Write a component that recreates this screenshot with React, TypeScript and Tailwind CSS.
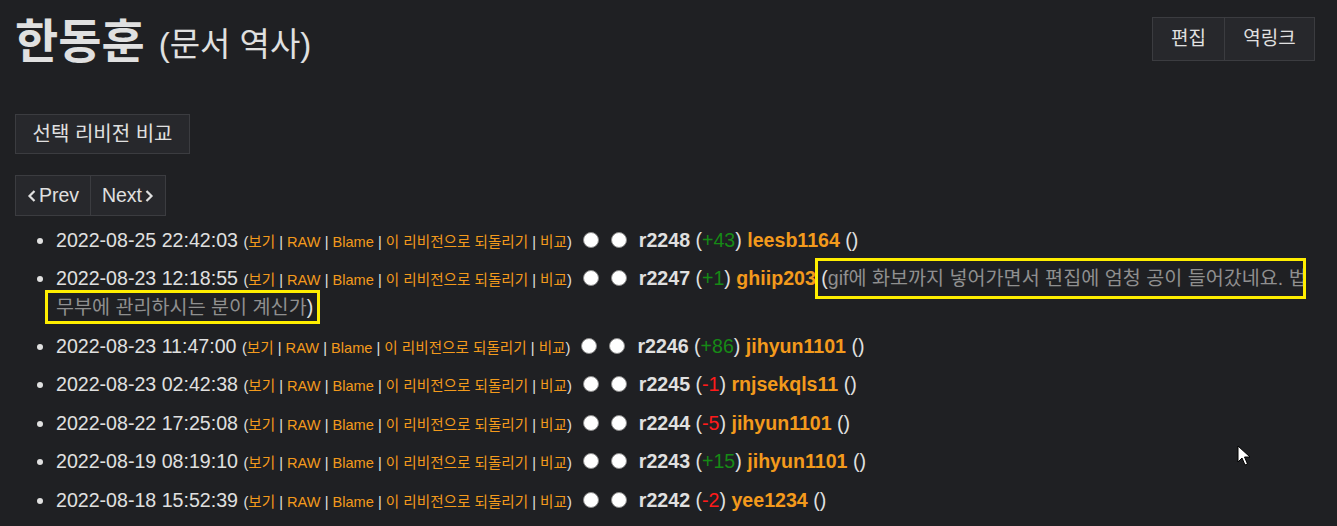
import React from "react";

const SANS = "font-['Liberation_Sans','Noto_Sans_CJK_KR',sans-serif]";

type Rev = {
  date: string;
  rev: string;
  diff: string;
  pos: boolean;
  user: string;
  comment?: boolean;
};

const revs: Rev[] = [
  { date: "2022-08-25 22:42:03", rev: "r2248", diff: "+43", pos: true, user: "leesb1164" },
  { date: "2022-08-23 12:18:55", rev: "r2247", diff: "+1", pos: true, user: "ghiip203", comment: true },
  { date: "2022-08-23 11:47:00", rev: "r2246", diff: "+86", pos: true, user: "jihyun1101" },
  { date: "2022-08-23 02:42:38", rev: "r2245", diff: "-1", pos: false, user: "rnjsekqls11" },
  { date: "2022-08-22 17:25:08", rev: "r2244", diff: "-5", pos: false, user: "jihyun1101" },
  { date: "2022-08-19 08:19:10", rev: "r2243", diff: "+15", pos: true, user: "jihyun1101" },
  { date: "2022-08-18 15:52:39", rev: "r2242", diff: "-2", pos: false, user: "yee1234" },
];

function Links() {
  const a = "text-[#f39a1c]";
  const s = "text-[#e0e0e0]";
  return (
    <span className="text-[14.6px] leading-[16px] text-[#e0e0e0]">
      (<span className={a}>보기</span> <span className={s}>|</span> <span className={a}>RAW</span>{" "}
      <span className={s}>|</span> <span className={a}>Blame</span> <span className={s}>|</span>{" "}
      <span className={a}>이 리비전으로 되돌리기</span> <span className={s}>|</span>{" "}
      <span className={a}>비교</span>)
    </span>
  );
}

function Radio() {
  return <span className="block w-[16px] h-[16px] rounded-full bg-white border border-[#8a8a8a]" />;
}

export default function App() {
  return (
    <div className={`relative min-h-[526px] bg-[#1f2023] text-[#e0e0e0] px-[15px] pt-[17px] ${SANS}`}>
      <div className="flex justify-between items-start h-[44px]">
        <h1 className="h-[44px] flex items-center whitespace-nowrap">
          <span className="text-[47px] leading-[54px] font-bold text-[#e0e0e0] translate-y-[3px]">한동훈</span>
          <span className="ml-[14px] text-[33px] leading-[54px] text-[#e0e0e0] translate-y-[6px]">(문서 역사)</span>
        </h1>
        <div className="flex border border-[#3b3c40] bg-[#27282c] h-[44px] mr-[7px]">
          <div className="w-[72px] flex items-center justify-center text-[19px] border-r border-[#3b3c40]">편집</div>
          <div className="w-[89px] flex items-center justify-center text-[19px]">역링크</div>
        </div>
      </div>

      <div className="mt-[53px] flex">
        <div className="flex items-center justify-center h-[40px] w-[175px] border border-[#3b3c40] bg-[#27282c] text-[20px]">
          선택 리비전 비교
        </div>
      </div>

      <div className="mt-[21px] flex">
        <div className="flex border border-[#3b3c40] bg-[#27282c] h-[41px]">
          <div className="w-[75px] flex items-center justify-center gap-[2px] text-[19.5px] border-r border-[#3b3c40]">
            <svg width="10" height="14" viewBox="0 0 10 14" fill="none" stroke="#e0e0e0" strokeWidth="2.2">
              <path d="M7.5 2 L2.5 7 L7.5 12" />
            </svg>
            <span>Prev</span>
          </div>
          <div className="w-[74px] flex items-center justify-center gap-[2px] text-[19.5px]">
            <span>Next</span>
            <svg width="10" height="14" viewBox="0 0 10 14" fill="none" stroke="#e0e0e0" strokeWidth="2.2">
              <path d="M2.5 2 L7.5 7 L2.5 12" />
            </svg>
          </div>
        </div>
      </div>

      <ul className="list-disc pl-[41px] mt-[5px] text-[19.6px] leading-[29px]">
        {revs.map((r) => (
          <li key={r.rev} className="relative py-[4.75px] marker:text-[#e0e0e0]">
            {r.date} <Links />
            <span className="inline-flex gap-[12px] ml-[11px] mr-[12px] align-[-1px] leading-[16px]">
              <Radio />
              <Radio />
            </span>
            <b>{r.rev}</b> (<span className={r.pos ? "text-[#168a16]" : "text-[#ff1a1a]"}>{r.diff}</span>){" "}
            <b className="text-[#f39a1c]">{r.user}</b>
            {r.comment ? (
              <>
                {" "}
                <span className="relative">
                  (<span className="text-[#8f8f8f]">gif에 화보까지 넣어가면서 편집에 엄청 공이 들어갔네요. 법</span>
                  <span className="absolute left-[-6px] top-[-9px] w-[491px] h-[41px] border-[3px] border-[#ffee00]" />
                </span>
                <br />
                <span className="relative">
                  <span className="text-[#8f8f8f]">무부에 관리하시는 분이 계신가</span>)
                  <span className="absolute left-[-11px] top-[-6px] w-[275px] h-[34px] border-[3px] border-[#ffee00]" />
                </span>
              </>
            ) : (
              <> ()</>
            )}
          </li>
        ))}
      </ul>
      <svg className="absolute left-[1237px] top-[445px]" width="14" height="22" viewBox="0 0 14 22">
        <path d="M1 1 L1 17 L5 13 L8 20 L10.5 19 L7.5 12 L13 12 Z" fill="white" stroke="black" strokeWidth="1" />
      </svg>
    </div>
  );
}
